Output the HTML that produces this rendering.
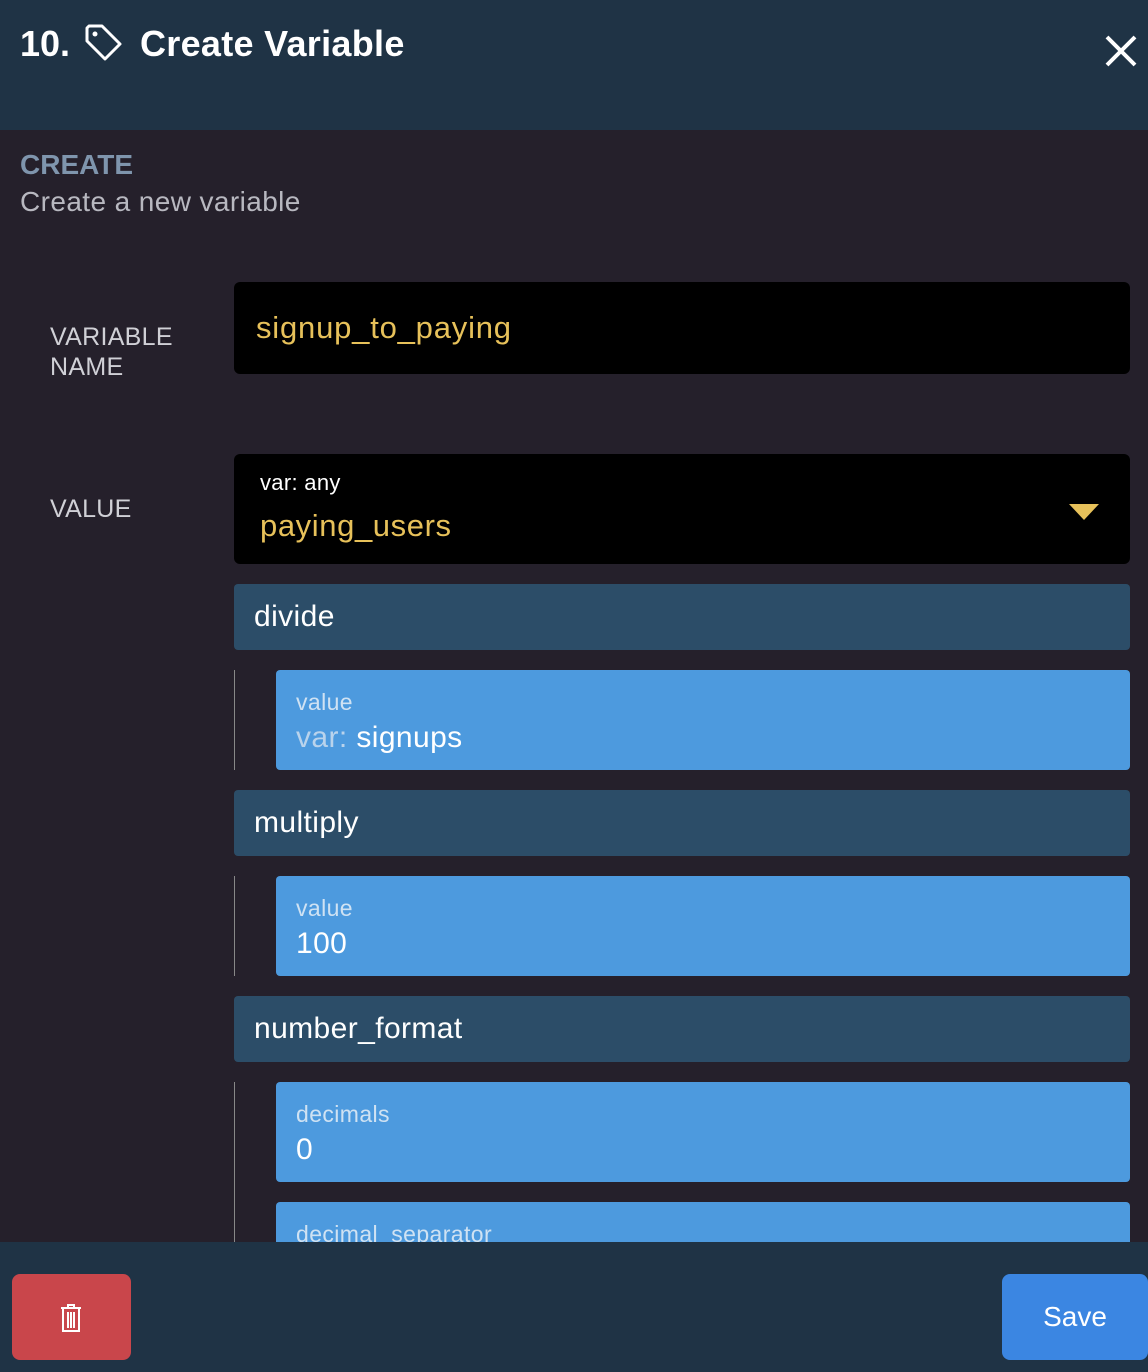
<!DOCTYPE html>
<html><head><style>
*{margin:0;padding:0;box-sizing:border-box}
body{width:1148px;height:1372px;background:#25202b;font-family:"Liberation Sans",sans-serif;position:relative;overflow:hidden}
.a{position:absolute}
.hdr{left:0;top:0;width:1148px;height:130px;background:#1f3345}
.t{color:#fff;font-weight:bold;font-size:36px}
.lab{color:#d0d0d6;font-size:25px;line-height:30px;letter-spacing:0.3px}
.box{background:#000;border-radius:6px}
.op{background:#2c4d68;border-radius:4px;color:#fff;font-size:30px;padding-left:20px;line-height:66px;height:66px;left:234px;width:896px;letter-spacing:0.4px}
.arg{background:#4d9ade;border-radius:4px;left:276px;width:854px;height:100px}
.arg .k{position:absolute;left:20px;top:19px;font-size:23px;color:#cfe2f3;letter-spacing:0.4px}
.arg .v{position:absolute;left:20px;top:51px;font-size:30px;color:#fff;letter-spacing:0.4px}
.vl{left:234px;width:1px;background:#888}
</style></head><body>
<div class="a hdr"></div>
<div class="a t" style="left:20px;top:23px">10.</div>
<svg class="a" style="left:84px;top:24px" width="40" height="40" viewBox="0 0 40 40" fill="none" stroke="#fff" stroke-width="3" stroke-linejoin="round"><path d="M3 4 L3 17 L21 35 L36 20 L18 2 L5 2 Z"/><circle cx="11" cy="10" r="2.5" fill="#fff" stroke="none"/></svg>
<div class="a t" style="left:140px;top:23px;letter-spacing:0.3px">Create Variable</div>
<svg class="a" style="left:1104px;top:34px" width="34" height="34" viewBox="0 0 34 34" stroke="#fff" stroke-width="4"><path d="M3 3L31 31M31 3L3 31"/></svg>
<div class="a" style="left:20px;top:149px;color:#7f95ad;font-weight:bold;font-size:28px">CREATE</div>
<div class="a" style="left:20px;top:186px;color:#b8b8c0;font-size:28px;letter-spacing:0.4px">Create a new variable</div>
<div class="a lab" style="left:50px;top:322px">VARIABLE<br>NAME</div>
<div class="a box" style="left:234px;top:282px;width:896px;height:92px"></div>
<div class="a" style="left:256px;top:310px;color:#e7c15a;font-size:31px;letter-spacing:0.8px">signup_to_paying</div>
<div class="a lab" style="left:50px;top:494px">VALUE</div>
<div class="a box" style="left:234px;top:454px;width:896px;height:110px"></div>
<div class="a" style="left:260px;top:470px;color:#fff;font-size:22px;letter-spacing:0.3px">var: any</div>
<div class="a" style="left:260px;top:508px;color:#e7c15a;font-size:31px;letter-spacing:0.6px">paying_users</div>
<svg class="a" style="left:1069px;top:504px" width="30" height="16"><path d="M0 0H30L15 16Z" fill="#e7c15a"/></svg>
<div class="a op" style="top:584px">divide</div>
<div class="a vl" style="top:670px;height:100px"></div>
<div class="a arg" style="top:670px"><div class="k">value</div><div class="v"><span style="color:#b9d3ec">var:</span> signups</div></div>
<div class="a op" style="top:790px">multiply</div>
<div class="a vl" style="top:876px;height:100px"></div>
<div class="a arg" style="top:876px"><div class="k">value</div><div class="v">100</div></div>
<div class="a op" style="top:996px">number_format</div>
<div class="a vl" style="top:1082px;height:160px"></div>
<div class="a arg" style="top:1082px"><div class="k">decimals</div><div class="v">0</div></div>
<div class="a arg" style="top:1202px"><div class="k">decimal_separator</div></div>
<div class="a" style="left:0;top:1242px;width:1148px;height:130px;background:#1f3345"></div>
<div class="a" style="left:12px;top:1274px;width:119px;height:86px;background:#c9464b;border-radius:8px"></div>
<svg class="a" style="left:59px;top:1303px" width="24" height="30" viewBox="0 0 24 30" fill="none" stroke="#fff" stroke-width="2"><path d="M2 5H22M9 5V2H15V5M4 5V28H20V5M9 9V25M12 9V25M15 9V25"/></svg>
<div class="a" style="left:1002px;top:1274px;width:146px;height:86px;background:#3b86e2;border-radius:8px;color:#fff;font-size:28px;line-height:86px;text-align:center">Save</div>
</body></html>
